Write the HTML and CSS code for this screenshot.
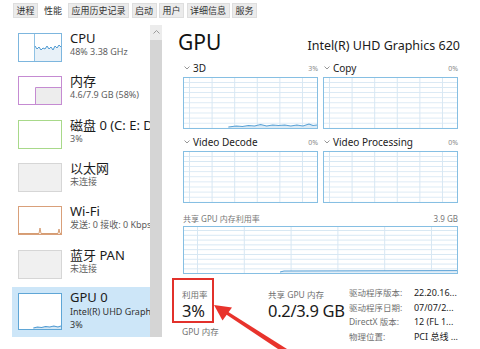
FILE: index.html
```html
<!DOCTYPE html>
<html lang="zh">
<head>
<meta charset="utf-8">
<link rel="stylesheet" href="styles.css">
</head>
<body>
<div class="tabs">
  <span class="tab">进程</span><span class="tab active">性能</span><span class="tab">应用历史记录</span><span class="tab">启动</span><span class="tab">用户</span><span class="tab">详细信息</span><span class="tab">服务</span>
</div>
<div class="main">
  <div class="sidebar">
    <ul class="list">
      <li class="item">
        <div class="thumb cpu">
          <svg viewBox="0 0 42 27" preserveAspectRatio="none"><line x1="15.5" y1="0" x2="15.5" y2="27" stroke="#8fc2e4" stroke-width="1"/><path d="M16 12 L18 15 L20 13 L22 16 L24 14 L26 15 L28 12 L30 15 L32 13 L34 16 L36 12 L38 14 L40 11 L42 13 L42 27 L16 27 Z" fill="#e8f1f8"/><polyline points="16,12 18,15 20,13 22,16 24,14 26,15 28,12 30,15 32,13 34,16 36,12 38,14 40,11 42,13" fill="none" stroke="#4f9ad2" stroke-width="1"/></svg>
        </div>
        <div class="info"><div class="name">CPU</div><div class="sub">48% 3.38 GHz</div></div>
      </li>
      <li class="item">
        <div class="thumb mem">
          <svg viewBox="0 0 42 27" preserveAspectRatio="none"><path d="M16.5 27 L16.5 10.5 L42 10.5" fill="#eeeeee" stroke="#c58bd2" stroke-width="1"/><rect x="17" y="11" width="25" height="16" fill="#ededed"/></svg>
        </div>
        <div class="info"><div class="name">内存</div><div class="sub">4.6/7.9 GB (58%)</div></div>
      </li>
      <li class="item">
        <div class="thumb disk"></div>
        <div class="info"><div class="name">磁盘 0 (C: E: D:)</div><div class="sub">3%</div></div>
      </li>
      <li class="item">
        <div class="thumb eth"></div>
        <div class="info"><div class="name">以太网</div><div class="sub">未连接</div></div>
      </li>
      <li class="item">
        <div class="thumb wifi">
          <svg viewBox="0 0 42 27" preserveAspectRatio="none"><polyline points="0,26.5 20,26.5 21,21 22,26.5 39,26.5 40,22 41,26.5 42,26.5" fill="none" stroke="#d59c72" stroke-width="1"/></svg>
        </div>
        <div class="info"><div class="name">Wi-Fi</div><div class="sub">发送: 0 接收: 0 Kbps</div></div>
      </li>
      <li class="item">
        <div class="thumb eth"></div>
        <div class="info"><div class="name">蓝牙 PAN</div><div class="sub">未连接</div></div>
      </li>
      <li class="item selected">
        <div class="thumb gpu">
          <svg viewBox="0 0 41 35" preserveAspectRatio="none"><path d="M14 34 L18 33 L22 33.5 L26 32.5 L30 33 L34 32 L38 33 L41 32 L41 35 L14 35 Z" fill="#d6e8f5"/><polyline points="14,34 18,33 22,33.5 26,32.5 30,33 34,32 38,33 41,32" fill="none" stroke="#4f9ad2" stroke-width="1"/></svg>
        </div>
        <div class="info"><div class="name">GPU 0</div><div class="sub">Intel(R) UHD Graphics 620</div><div class="sub">3%</div></div>
      </li>
    </ul>
    <div class="scrollbar">
      <div class="sb-arrow"><svg viewBox="0 0 7 4"><polyline points="0.5,3.5 3.5,0.5 6.5,3.5" fill="none" stroke="#9a9a9a" stroke-width="1"/></svg></div>
      <div class="sb-thumb"></div>
    </div>
  </div>

  <div class="content">
    <div class="head">
      <h1 class="title">GPU</h1>
      <div class="model">Intel(R) UHD Graphics 620</div>
    </div>

    <div class="engines">
      <div class="engine">
        <div class="elabel"><span class="ename"><svg class="chev" viewBox="0 0 6 4"><polyline points="0.5,0.5 3,3 5.5,0.5" fill="none" stroke="#8a8a8a" stroke-width="0.9"/></svg>3D</span><span class="pct">3%</span></div>
        <div class="chart small">
          <svg viewBox="0 0 132 50" preserveAspectRatio="none"><path d="M44 49 L52 48 L58 48.5 L64 47.5 L70 48 L76 46.5 L82 48 L88 47 L94 47.5 L100 47 L106 48 L112 47 L118 48 L124 46 L128 47.5 L132 47 L132 50 L44 50 Z" fill="#dcebf6"/><polyline points="44,49 52,48 58,48.5 64,47.5 70,48 76,46.5 82,48 88,47 94,47.5 100,47 106,48 112,47 118,48 124,46 128,47.5 132,47" fill="none" stroke="#5aa2d6" stroke-width="1"/></svg>
        </div>
      </div>
      <div class="engine">
        <div class="elabel"><span class="ename"><svg class="chev" viewBox="0 0 6 4"><polyline points="0.5,0.5 3,3 5.5,0.5" fill="none" stroke="#8a8a8a" stroke-width="0.9"/></svg>Copy</span><span class="pct">0%</span></div>
        <div class="chart small"></div>
      </div>
      <div class="engine">
        <div class="elabel"><span class="ename"><svg class="chev" viewBox="0 0 6 4"><polyline points="0.5,0.5 3,3 5.5,0.5" fill="none" stroke="#8a8a8a" stroke-width="0.9"/></svg>Video Decode</span><span class="pct">0%</span></div>
        <div class="chart small"></div>
      </div>
      <div class="engine">
        <div class="elabel"><span class="ename"><svg class="chev" viewBox="0 0 6 4"><polyline points="0.5,0.5 3,3 5.5,0.5" fill="none" stroke="#8a8a8a" stroke-width="0.9"/></svg>Video Processing</span><span class="pct">0%</span></div>
        <div class="chart small"></div>
      </div>
    </div>

    <div class="shared-label"><span>共享 GPU 内存利用率</span><span>3.9 GB</span></div>
    <div class="chart big">
      <svg viewBox="0 0 273 46" preserveAspectRatio="none"><path d="M96 45 L100 44 L273 43.6 L273 46 L96 46 Z" fill="#e2eef8"/><polyline points="96,45 100,44 273,43.6" fill="none" stroke="#5aa2d6" stroke-width="1"/></svg>
    </div>

    <div class="stats">
      <div class="stat-util">
        <div class="util-box">
          <div class="slabel">利用率</div>
          <div class="sval">3%</div>
        </div>
        <div class="slabel below">GPU 内存</div>
      </div>
      <div class="stat-shared">
        <div class="slabel">共享 GPU 内存</div>
        <div class="sval">0.2/3.9 GB</div>
      </div>
      <dl class="props">
        <dt>驱动程序版本:</dt><dd>22.20.16...</dd>
        <dt>驱动程序日期:</dt><dd>07/07/2...</dd>
        <dt>DirectX 版本:</dt><dd>12 (FL 1...</dd>
        <dt>物理位置:</dt><dd>PCI 总线 ...</dd>
      </dl>
    </div>
  </div>
</div>

<svg class="arrow" viewBox="0 0 480 349" width="480" height="349">
  <path d="M284 353 L224 313 L226 310.5 L287 349 Z" fill="#e8332c"/>
  <polygon points="214,305 232,307.5 222.5,320.5" fill="#e8332c"/>
</svg>
</body>
</html>
```
FILE: styles.css
```css
* { box-sizing: border-box; margin: 0; padding: 0; }
html, body { width: 480px; height: 349px; overflow: hidden; background: #fff; }
body {
  font-family: "Noto Sans", "Noto Sans CJK SC", sans-serif;
  color: #1b1b1b;
  position: relative;
}

/* tabs */
.tabs {
  height: 20px;
  display: flex;
  gap: 2.5px;
  padding: 3px 0 0 13px;
}
.tab {
  height: 15px;
  padding: 0 2.5px;
  font-size: 9px;
  line-height: 14px;
  color: #333;
  background: #ebebeb;
  border: 1px solid #dedede;
  white-space: nowrap;
}
.tab.active { background: #fff; border-color: #fff; }

.main { display: flex; height: 329px; }

/* sidebar */
.sidebar { width: 165px; display: flex; flex: none; }
.list {
  list-style: none;
  width: 150px;
  overflow: hidden;
  padding-top: 7px;
}
.item {
  height: 43.33px;
  margin-left: 12px;
  padding-left: 6px;
  display: flex;
  align-items: flex-start;
  white-space: nowrap;
  overflow: hidden;
}
.item.selected { height: 50px; background: #cde6f8; }
.thumb {
  width: 44px;
  height: 29px;
  margin-top: 6px;
  flex: none;
  border: 1px solid #ccc;
  background: #fff;
}
.thumb svg { display: block; width: 100%; height: 100%; }
.thumb.cpu { border-color: #7db6de; }
.thumb.mem { border-color: #c58bd2; }
.thumb.disk { border-color: #a8d98a; }
.thumb.eth { border-color: #d6d6d6; background: #f0f0f0; }
.thumb.wifi { border-color: #d9a07a; }
.thumb.gpu { border-color: #5fa6d6; height: 37px; }
.info { margin-left: 8px; padding-top: 4px; }
.name { font-size: 13px; line-height: 15px; color: #1b1b1b; }
.sub { font-size: 9px; line-height: 12px; color: #5e5e5e; }
.selected .info { padding-top: 3px; }
.selected .sub { line-height: 13px; color: #333; }

.scrollbar {
  width: 12px;
  margin: 5px 0 0 0;
  height: 312px;
  background: #ececec;
  display: flex;
  flex-direction: column;
  align-items: center;
}
.sb-arrow { height: 14px; display: flex; align-items: center; justify-content: center; }
.sb-arrow svg { width: 7px; height: 4px; display: block; }
.sb-thumb { width: 12px; flex: 1; background: #d5d5d5; margin-top: 1px; }

/* content */
.content { width: 315px; padding: 0 22px 0 18px; flex: none; }
.head {
  display: flex;
  justify-content: space-between;
  align-items: baseline;
  padding-top: 9px;
}
.title { font-size: 21px; font-weight: 400; line-height: 26px; margin-left: -5px; color: #111; }
.model { font-size: 12.5px; color: #1b1b1b; margin-right: -2px; }

.engines {
  display: grid;
  grid-template-columns: 135px 135px;
  column-gap: 5px;
  margin-top: 4px;
}
.elabel {
  display: flex;
  justify-content: space-between;
  align-items: center;
  height: 18px;
  font-size: 10px;
  color: #222;
}
.ename { display: flex; align-items: center; }
.chev { width: 6px; height: 4px; margin: 0 3px 0 1px; }
.pct { font-size: 7px; color: #8a8a8a; }

.chart {
  border: 1px solid #86bfe3;
  background-color: #fff;
  background-image:
    linear-gradient(to bottom, #d7e7f3 1px, transparent 1px),
    linear-gradient(to right, #d7e7f3 1px, transparent 1px);
  background-size: 100% 5.1px, 22.6px 100%;
  background-position: 0 4px, 5px 0;
}
.chart svg { display: block; width: 100%; height: 100%; }
.chart.small { height: 52px; margin-bottom: 4px; }
.chart.big {
  height: 48px;
  background-size: 100% 4.8px, 46.8px 100%;
  background-position: 0 3px, 13px 0;
}

.shared-label {
  display: flex;
  justify-content: space-between;
  font-size: 8px;
  color: #777;
  line-height: 10px;
  margin: 7px 0 2px;
}

.stats {
  display: flex;
  margin-left: -11px;
  margin-top: 4px;
}
.stat-util { width: 42px; }
.util-box {
  width: 42px;
  height: 45px;
  border: 2px solid #e2312b;
  padding: 9px 0 0 8px;
}
.slabel { font-size: 8.5px; line-height: 11px; color: #707070; white-space: nowrap; }
.sval { font-size: 16.5px; line-height: 22px; color: #1a1a1a; white-space: nowrap; letter-spacing: -0.3px; }
.slabel.below { padding-left: 10px; margin-top: 3px; }
.stat-shared { margin-left: 54px; width: 81px; padding-top: 11px; }
.props {
  display: grid;
  grid-template-columns: 65px auto;
  font-size: 8.5px;
  line-height: 14.5px;
  padding-top: 8px;
  white-space: nowrap;
}
.props dt { color: #707070; }
.props dd { color: #1b1b1b; font-size: 9px; }

.arrow { position: absolute; left: 0; top: 0; pointer-events: none; }
```
